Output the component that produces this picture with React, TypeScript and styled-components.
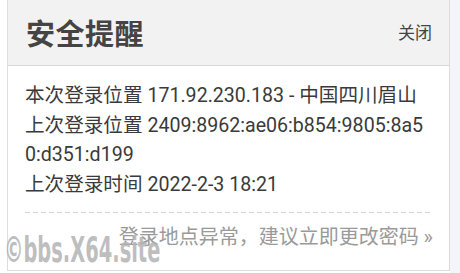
import React from "react";
import styled, { createGlobalStyle } from "styled-components";

const Global = createGlobalStyle`
  html, body { margin: 0; padding: 0; }
  body {
    width: 460px;
    height: 273px;
    overflow: hidden;
    background: linear-gradient(to right, #ffffff 0 450px, #f4f5f9 450px);
    font-family: Roboto, "Noto Sans CJK SC", sans-serif;
  }
`;

const Page = styled.div`
  position: relative;
  width: 460px;
  height: 273px;
  padding-left: 7px;
  box-sizing: border-box;
`;

const Card = styled.div`
  width: 443px;
  height: 272px;
  margin-top: -1px;
  box-sizing: border-box;
  border: 1px solid #dcdcdc;
  background: #fff;
  display: flex;
  flex-direction: column;
`;

const Header = styled.div`
  height: 66px;
  box-sizing: border-box;
  background: #f2f2f2;
  border-bottom: 1px solid #d9d9d9;
  display: flex;
  align-items: center;
  justify-content: space-between;
  padding: 0 17px 2px 18px;
`;

const Title = styled.h1`
  margin: 0;
  font-size: 29px;
  font-weight: 700;
  color: #444;
  font-family: "Noto Sans CJK SC", sans-serif;
  letter-spacing: 0.5px;
`;

const Close = styled.span`
  font-size: 17px;
  color: #444;
  font-family: "Noto Sans CJK SC", sans-serif;
`;

const Body = styled.div`
  padding: 15px 14px 0 17px;
  display: flex;
  flex-direction: column;
`;

const Line = styled.div`
  font-size: 19.6px;
  line-height: 29.5px;
  color: #3a3a3a;
  word-break: break-all;
`;

const Divider = styled.div`
  margin: 13px 2px 0 0;
  height: 1px;
  background-image: linear-gradient(to right, #d6d6d6 0 5px, transparent 5px 8px);
  background-size: 8px 1px;
`;

const Footer = styled.div`
  margin: 11px 2px 0 0;
  text-align: right;
  font-size: 20px;
  color: #9a9a9a;
  line-height: 26px;
`;

const Watermark = styled.div`
  position: absolute;
  left: 4px;
  top: 231px;
  font-family: "DejaVu Sans Condensed", "DejaVu Sans", sans-serif;
  font-weight: 700;
  font-size: 36px;
  line-height: 40px;
  color: rgba(178, 178, 178, 0.85);
  transform: scaleX(0.6);
  transform-origin: left top;
  white-space: nowrap;
  pointer-events: none;
`;

export default function App() {
  return (
    <>
      <Global />
      <Page>
        <Card>
          <Header>
            <Title>安全提醒</Title>
            <Close>关闭</Close>
          </Header>
          <Body>
            <Line>本次登录位置 171.92.230.183 - 中国四川眉山</Line>
            <Line>上次登录位置 2409:8962:ae06:b854:9805:8a50:d351:d199</Line>
            <Line>上次登录时间 2022-2-3 18:21</Line>
            <Divider />
            <Footer>登录地点异常，建议立即更改密码 »</Footer>
          </Body>
        </Card>
        <Watermark>©bbs.X64.site</Watermark>
      </Page>
    </>
  );
}
